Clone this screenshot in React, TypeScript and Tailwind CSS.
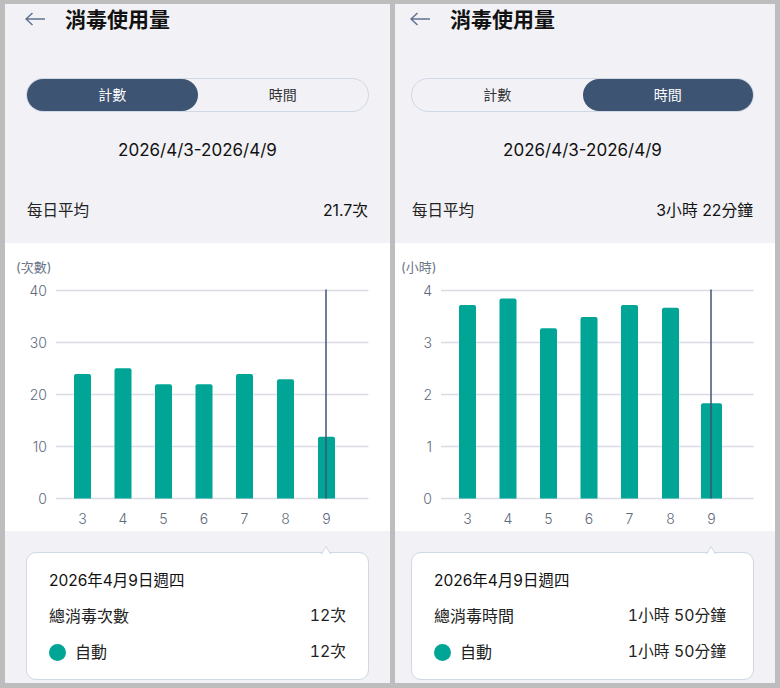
import React from "react";

const FONT = "font-['Inter','Noto_Sans_CJK_TC',sans-serif]";

type PanelData = {
  tab: "count" | "time";
  average: string;
  unit: string;
  ticks: string[];
  tops: number[];
  totalValue: string;
};

const DAYS = ["3", "4", "5", "6", "7", "8", "9"];
const GRID_Y = [285.5, 337.5, 389.5, 441.5, 493.5].map((y) => y - 238);
const BAR_X = [69, 109.5, 150, 190.5, 231, 272, 313];

const Chart = ({ data }: { data: PanelData }) => {
  const base = GRID_Y[4];
  return (
    <svg width="385" height="288" className="block">
      <text x="11" y="29" fontSize="13" fill="#6b7688" fontFamily="Inter, 'Noto Sans CJK TC', sans-serif">
        {data.unit}
      </text>
      {GRID_Y.map((y, i) => (
        <g key={y}>
          <line x1="51" x2="363.5" y1={y} y2={y} stroke="#d9dce6" strokeWidth="1.3" />
          <text x="42" y={y + 5} textAnchor="end" fontSize="14" fontWeight="300" fill="#5f6a7c" fontFamily="Inter, sans-serif">
            {data.ticks[i]}
          </text>
        </g>
      ))}
      {data.tops.map((top, i) => {
        const last = i === 6 && data.tab === "time";
        const x = last ? BAR_X[i] - 2 : BAR_X[i];
        const w = last ? 21 : 17;
        const y = top - 243;
        return (
          <path
            key={i}
            d={`M${x} ${base}V${y + 2}a2 2 0 0 1 2 -2H${x + w - 2}a2 2 0 0 1 2 2V${base}Z`}
            fill="#00a596"
          />
        );
      })}
      <line x1="321" x2="321" y1={GRID_Y[0] - 1} y2={base} stroke="#3e5473" strokeWidth="1.5" />
      {DAYS.map((d, i) => (
        <text key={d} x={BAR_X[i] + 8.5} y="281" textAnchor="middle" fontSize="14" fontWeight="300" fill="#5f6a7c" fontFamily="Inter, sans-serif">
          {d}
        </text>
      ))}
    </svg>
  );
};

const Panel = ({ data, className, innerClass }: { data: PanelData; className: string; innerClass: string }) => {
  const tabClass = (active: boolean) =>
    `flex flex-1 items-center justify-center rounded-full pb-px text-[14px] ${
      active ? "bg-[#3e5473] text-white" : "text-[#333333]"
    }`;
  const valueClass = `text-[15.8px] tabular-nums ${data.tab === "time" ? "mr-[5px]" : ""}`;

  return (
    <div className={`h-[679px] overflow-hidden bg-[#f1f1f6] ${className}`}>
      <div className={`w-[385px] ${innerClass}`}>
        <header className="flex h-[30px] items-center pl-5">
          <svg width="20" height="14" viewBox="0 0 20 14" fill="none" stroke="#5f7390" strokeWidth="1.5">
            <path d="M20 7H1M7.5 1L1 7l6.5 6" />
          </svg>
          <h1 className="ml-5 text-[21px] leading-none font-bold text-[#111111]">消毒使用量</h1>
        </header>

        <div className="mx-[21px] mt-11 flex h-[34px] rounded-full border border-[#d0d8e5]">
          <div className={tabClass(data.tab === "count")}>計數</div>
          <div className={tabClass(data.tab === "time")}>時間</div>
        </div>

        <div className="mt-[26px] text-center text-[17px] leading-[24px] text-[#111111]">2026/4/3-2026/4/9</div>

        <div className="mx-[22px] mt-[37px] flex h-6 items-center justify-between text-[15.5px] text-[#222222]">
          <span>每日平均</span>
          <span className="text-[15.8px] text-[#111111]">{data.average}</span>
        </div>

        <section className="mt-5 bg-white">
          <Chart data={data} />
        </section>

        <div className="relative mx-[21px] mt-[21px] h-[128px] rounded-[10px] border border-[#d0d8e5] bg-white px-[22px] pt-4 text-[16px] text-[#222222]">
          <svg width="10" height="8" viewBox="0 0 10 8" className="absolute top-[-7px] right-[37px]">
            <path d="M0 7.5H1L5 .5l4 7h1" fill="#ffffff" stroke="#d0d8e5" />
          </svg>
          <div className="h-6 text-[15.5px] leading-6 text-[#111111]">2026年4月9日週四</div>
          <div className="mt-[11px] flex h-6 items-center justify-between">
            <span>總消毒{data.tab === "count" ? "次數" : "時間"}</span>
            <span className={valueClass}>{data.totalValue}</span>
          </div>
          <div className="mt-3 flex h-6 items-center justify-between">
            <span className="flex items-center gap-[9px]">
              <span className="h-[17px] w-[17px] rounded-full bg-[#00a596]" />
              自動
            </span>
            <span className={valueClass}>{data.totalValue}</span>
          </div>
        </div>
      </div>
    </div>
  );
};

const count: PanelData = {
  tab: "count",
  average: "21.7次",
  unit: "(次數)",
  ticks: ["40", "30", "20", "10", "0"],
  tops: [374, 368.3, 384.3, 384.3, 374, 379.3, 436.7],
  totalValue: "12次",
};

const time: PanelData = {
  tab: "time",
  average: "3小時 22分鐘",
  unit: "(小時)",
  ticks: ["4", "3", "2", "1", "0"],
  tops: [305, 298.5, 328.3, 317, 305, 307.7, 403.3],
  totalValue: "1小時 50分鐘",
};

export default function App() {
  return (
    <div className={`flex h-[688px] w-[780px] gap-[5px] bg-[#bdbdbd] pt-1 pl-[5px] ${FONT}`}>
      <Panel data={count} className="w-[385px]" innerClass="" />
      <Panel data={time} className="w-[380px]" innerClass="-ml-[5px]" />
    </div>
  );
}
